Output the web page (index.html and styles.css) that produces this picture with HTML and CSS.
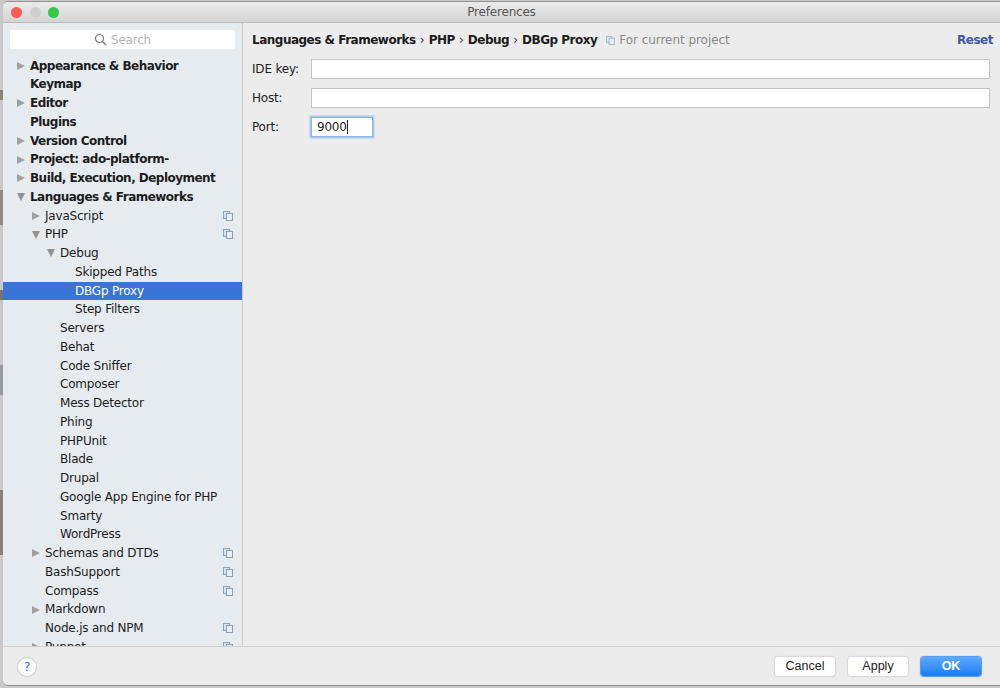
FILE: index.html
```html
<!DOCTYPE html>
<html>
<head>
    <title>Preferences</title>
    <link rel="stylesheet" href="styles.css">
</head>
<body>
  <div class="window">
    <div class="titlebar">
      <span class="light light-red"></span>
      <span class="light light-grey"></span>
      <span class="light light-green"></span>
      <div class="title">Preferences</div>
    </div>

    <div class="main">
      <div class="sidebar">
        <div class="search">
          <svg class="search-icon" width="13" height="13" viewBox="0 0 13 13"><circle cx="5.5" cy="5.5" r="4" fill="none" stroke="#777" stroke-width="1.2"/><path d="M8.5 8.5 L12 12" stroke="#777" stroke-width="1.4"/></svg>
          <span>Search</span>
        </div>
        <div class="tree">
          <div class="row top"><span class="arrow right"></span>Appearance &amp; Behavior</div>
          <div class="row top"><span class="arrow"></span>Keymap</div>
          <div class="row top"><span class="arrow right"></span>Editor</div>
          <div class="row top"><span class="arrow"></span>Plugins</div>
          <div class="row top"><span class="arrow right"></span>Version Control</div>
          <div class="row top"><span class="arrow right"></span>Project: ado-platform-</div>
          <div class="row top"><span class="arrow right"></span>Build, Execution, Deployment</div>
          <div class="row top"><span class="arrow down"></span>Languages &amp; Frameworks</div>
          <div class="row lvl1"><span class="arrow right"></span>JavaScript<svg class="copy"><use href="#copy"/></svg></div>
          <div class="row lvl1"><span class="arrow down"></span>PHP<svg class="copy"><use href="#copy"/></svg></div>
          <div class="row lvl2"><span class="arrow down"></span>Debug</div>
          <div class="row lvl3"><span class="arrow"></span>Skipped Paths</div>
          <div class="row lvl3 selected"><span class="arrow"></span>DBGp Proxy</div>
          <div class="row lvl3"><span class="arrow"></span>Step Filters</div>
          <div class="row lvl2"><span class="arrow"></span>Servers</div>
          <div class="row lvl2"><span class="arrow"></span>Behat</div>
          <div class="row lvl2"><span class="arrow"></span>Code Sniffer</div>
          <div class="row lvl2"><span class="arrow"></span>Composer</div>
          <div class="row lvl2"><span class="arrow"></span>Mess Detector</div>
          <div class="row lvl2"><span class="arrow"></span>Phing</div>
          <div class="row lvl2"><span class="arrow"></span>PHPUnit</div>
          <div class="row lvl2"><span class="arrow"></span>Blade</div>
          <div class="row lvl2"><span class="arrow"></span>Drupal</div>
          <div class="row lvl2"><span class="arrow"></span>Google App Engine for PHP</div>
          <div class="row lvl2"><span class="arrow"></span>Smarty</div>
          <div class="row lvl2"><span class="arrow"></span>WordPress</div>
          <div class="row lvl1"><span class="arrow right"></span>Schemas and DTDs<svg class="copy"><use href="#copy"/></svg></div>
          <div class="row lvl1"><span class="arrow"></span>BashSupport<svg class="copy"><use href="#copy"/></svg></div>
          <div class="row lvl1"><span class="arrow"></span>Compass<svg class="copy"><use href="#copy"/></svg></div>
          <div class="row lvl1"><span class="arrow right"></span>Markdown</div>
          <div class="row lvl1"><span class="arrow"></span>Node.js and NPM<svg class="copy"><use href="#copy"/></svg></div>
          <div class="row lvl1"><span class="arrow right"></span>Puppet<svg class="copy"><use href="#copy"/></svg></div>
        </div>
      </div>

      <div class="content">
        <div class="crumbs">
          <span class="crumb">Languages &amp; Frameworks</span><span class="sep">›</span>
          <span class="crumb">PHP</span><span class="sep">›</span>
          <span class="crumb">Debug</span><span class="sep">›</span>
          <span class="crumb">DBGp Proxy</span>
          <svg class="copy copy-small"><use href="#copy"/></svg>
          <span class="scope">For current project</span>
          <a class="reset">Reset</a>
        </div>
        <div class="field"><label>IDE key:</label><div class="input"></div></div>
        <div class="field"><label>Host:</label><div class="input"></div></div>
        <div class="field"><label>Port:</label><div class="input port">9000<span class="caret"></span></div></div>
      </div>
    </div>

    <div class="footer">
      <div class="help">?</div>
      <div class="buttons">
        <div class="btn">Cancel</div>
        <div class="btn">Apply</div>
        <div class="btn btn-ok">OK</div>
      </div>
    </div>
  </div>

  <svg width="0" height="0" class="defs">
    <symbol id="copy" viewBox="0 0 10 10">
      <rect x="0.5" y="0.5" width="6" height="7" fill="#d5e3ee" stroke="#7fa5c4"/>
      <rect x="3.5" y="2.5" width="6" height="7" fill="#e8eef3" stroke="#8aa0b2"/>
    </symbol>
  </svg>
</body>
</html>
```

FILE: styles.css
```css
html, body {
  margin: 0;
  height: 100%;
}

/* blurred desktop showing down the left edge of the window */
body {
  background: linear-gradient(#c9c9c9 90px, #8a8478 90px, #8a8478 100px, #c9c9c9 100px, #c9c9c9 190px, #8f8a80 190px, #8f8a80 225px, #c9c9c9 225px, #c9c9c9 290px, #77736c 290px, #77736c 300px, #c9c9c9 300px, #c9c9c9 365px, #9a9aa4 365px, #9a9aa4 395px, #c9c9c9 395px, #c9c9c9 490px, #85827c 490px, #85827c 555px, #c9c9c9 555px);
  overflow: hidden;
  font-family: "DejaVu Sans", sans-serif;
  font-size: 12px;
  letter-spacing: -0.2px;
  color: #1c1c1c;
}

.defs {
  position: absolute;
}

.window {
  height: 685px;
  margin: 1px 0 0 3px;
  background: #ececec;
  border-top: 1px solid #8f8f8f;
  border-bottom: 1px solid #8f8f8f;
  box-sizing: border-box;
  border-radius: 5px 0 0 5px;
  display: flex;
  flex-direction: column;
  overflow: hidden;
}

/* title bar */
.titlebar {
  height: 20px;
  flex: none;
  display: flex;
  align-items: center;
  gap: 7.5px;
  padding-left: 8px;
  position: relative;
  background: linear-gradient(#ebebeb, #d4d4d4);
  border-bottom: 1px solid #b9b9b9;
}

.light {
  width: 11px;
  height: 11px;
  border-radius: 50%;
}

.light-red { background: #fc5b57; }
.light-grey { background: #d0d0d0; }
.light-green { background: #34c84a; }

.title {
  position: absolute;
  left: 0;
  right: 0;
  text-align: center;
  color: #555;
}

.main {
  flex: 1;
  display: flex;
  min-height: 0;
}

/* left tree */
.sidebar {
  width: 239px;
  flex: none;
  background: #e6ebf0;
  border-right: 1px solid #c9c9c9;
  overflow: hidden;
}

.search {
  height: 19px;
  margin: 7px 7px 7.5px 7px;
  background: #fff;
  border-radius: 2px;
  display: flex;
  align-items: center;
  justify-content: center;
  gap: 4px;
  color: #b4b4b4;
}

.row {
  height: 18.75px;
  line-height: 18.75px;
  display: flex;
  align-items: center;
  white-space: nowrap;
  position: relative;
}

.top {
  font-weight: bold;
  letter-spacing: -0.53px;
  padding-left: 14px;
}

.lvl1 { padding-left: 29px; }
.lvl2 { padding-left: 44px; }
.lvl3 { padding-left: 59px; }

.selected {
  background: #3875d7;
  color: #fff;
}

.arrow {
  width: 13px;
  flex: none;
  display: block;
  height: 9px;
}

.arrow.right {
  width: 0;
  height: 0;
  margin-right: 5px;
  border-left: 8px solid #a0a0a0;
  border-top: 4px solid transparent;
  border-bottom: 4px solid transparent;
}

.arrow.down {
  width: 0;
  height: 0;
  margin-right: 5px;
  border-top: 8px solid #929292;
  border-left: 4px solid transparent;
  border-right: 4px solid transparent;
}

.copy {
  position: absolute;
  right: 9px;
  top: 4px;
  width: 10px;
  height: 10px;
}

/* right panel */
.content {
  flex: 1;
  padding: 0 10px 0 9px;
}

.crumbs {
  height: 18px;
  margin: 8px -3px 10px 0;
  display: flex;
  align-items: center;
  white-space: nowrap;
}

.crumb {
  font-weight: bold;
  letter-spacing: -0.5px;
}

.sep {
  margin: 0 4.2px;
  color: #333;
}

.copy-small {
  position: static;
  width: 9px;
  height: 9px;
  margin: 0 4px 0 9px;
  opacity: 0.7;
}

.scope {
  color: #8a8a8a;
  letter-spacing: -0.05px;
}

.reset {
  margin-left: auto;
  font-weight: bold;
  letter-spacing: -0.5px;
  color: #3a5a9c;
}

.field {
  display: flex;
  align-items: center;
  height: 20px;
  margin-bottom: 9px;
}

.field label {
  width: 59px;
  flex: none;
}

.input {
  flex: 1;
  height: 18px;
  background: #fff;
  border: 1px solid #c4c4c4;
  line-height: 18px;
}

.port {
  flex: none;
  width: 55px;
  padding-left: 5px;
  border: 1px solid #8fb4e4;
  box-shadow: 0 0 0 1.5px #a9c8ef;
  display: flex;
  align-items: center;
}

.caret {
  width: 1px;
  height: 14px;
  background: #222;
}

/* footer */
.footer {
  height: 37px;
  flex: none;
  border-top: 1px solid #cfcfcf;
  display: flex;
  align-items: center;
  justify-content: space-between;
  padding: 1px 19px 0 15px;
}

.help {
  width: 18px;
  height: 18px;
  line-height: 18px;
  border-radius: 50%;
  background: #fff;
  box-shadow: 0 0 1px 1px #cfcfcf;
  text-align: center;
  color: #2a6fe0;
}

.buttons {
  display: flex;
  gap: 13px;
}

.btn {
  width: 60px;
  height: 19px;
  line-height: 19px;
  text-align: center;
  background: #fff;
  border-radius: 3px;
  box-shadow: 0 0 1px 1px #d8d8d8;
  color: #222;
  letter-spacing: 0;
  font-family: "Liberation Sans", sans-serif;
  font-size: 12.5px;
}

.btn-ok {
  background: linear-gradient(#5eaafc, #1c7cf4);
  box-shadow: 0 0 1px 1px #4c94ef;
  color: #fff;
  font-weight: bold;
}
```
